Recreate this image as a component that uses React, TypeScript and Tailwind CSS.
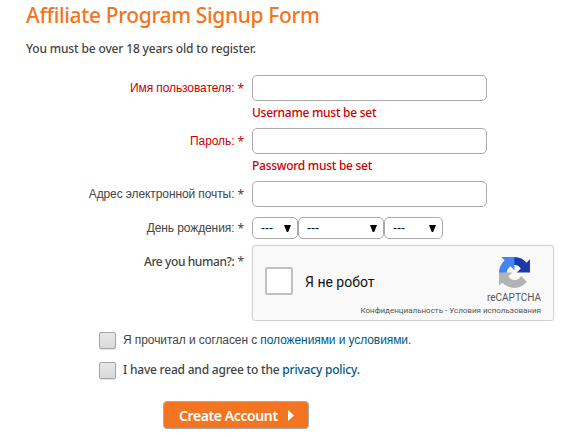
import type { ReactNode } from "react";

const UI = "font-['Noto_Sans','Open_Sans',sans-serif]";
const CYR = "font-['Liberation_Sans',sans-serif]";

function Row({ label, latin, red, className, children }: { label: string; latin?: boolean; red?: boolean; className: string; children: ReactNode }) {
  return (
    <div className={`flex items-start ${className}`}>
      <div className={`flex w-[244px] shrink-0 items-center justify-end whitespace-nowrap text-[12px] ${latin ? "h-[33px]" : "h-[26px]"} ${red ? "text-[#cc0000]" : "text-[#444444]"}`}>
        <span className={latin ? `${UI} font-medium tracking-[-0.4px]` : `${CYR} tracking-[-0.1px]`}>{label}</span>
        <span className={`${UI} ml-[3px] pt-px`}>*</span>
      </div>
      <div className="ml-2">{children}</div>
    </div>
  );
}

function Field({ error }: { error?: string }) {
  return (
    <>
      <input className="block h-[26px] w-[235px] rounded-[5px] border border-[#aaaaaa] bg-white px-2 outline-none" />
      {error && <p className={`${UI} mt-[3px] h-[18px] text-[12px] leading-[18px] font-medium tracking-[-0.27px] whitespace-nowrap text-[#cc0000]`}>{error}</p>}
    </>
  );
}

function Picker({ className }: { className: string }) {
  return (
    <button type="button" className={`flex h-[22px] items-center justify-between rounded-[5px] border border-[#aaaaaa] bg-white pr-[6px] pl-2 text-black ${className}`}>
      <span className={`${CYR} text-[12px] leading-none`}>---</span>
      <svg width="7" height="7" viewBox="0 0 7 7"><path d="M0 0h7L4.2 7H2.8z" fill="#000" /></svg>
    </button>
  );
}

function RecaptchaLogo() {
  return (
    <svg width="31" height="31" viewBox="0 0 64 64">
      <path d="M64 31.955l-.033-1.37V4.687l-7.16 7.16C50.948 4.674 42.033.093 32.05.093c-10.4 0-19.622 4.96-25.458 12.64l11.736 11.86a15.55 15.55 0 0 1 4.754-5.334c2.05-1.6 4.952-2.906 8.968-2.906.485 0 .86.057 1.135.163 4.976.393 9.288 3.14 11.828 7.124l-8.307 8.307L64 31.953" fill="#1c3aa9" />
      <path d="M31.862.094l-1.37.033H4.594l7.16 7.16C4.58 13.147 0 22.06 0 32.046c0 10.4 4.96 19.622 12.64 25.458L24.5 45.768a15.55 15.55 0 0 1-5.334-4.754c-1.6-2.05-2.906-4.952-2.906-8.968 0-.485.057-.86.163-1.135.393-4.976 3.14-9.288 7.124-11.828l8.307 8.307L31.86.095" fill="#4285f4" />
      <path d="M.001 32.045l.033 1.37v25.898l7.16-7.16c5.86 7.173 14.774 11.754 24.76 11.754 10.4 0 19.622-4.96 25.458-12.64l-11.736-11.86a15.55 15.55 0 0 1-4.754 5.334c-2.05 1.6-4.952 2.906-8.968 2.906-.485 0-.86-.057-1.135-.163-4.976-.393-9.288-3.14-11.828-7.124l8.307-8.307c-10.522.04-22.4.066-27.295-.005" fill="#b3b3b3" />
    </svg>
  );
}

function Captcha() {
  return (
    <div className="flex h-[76px] w-[302px] rounded-[3px] border border-[#d3d3d3] bg-[#f9f9f9] shadow-[0_0_3px_rgba(0,0,0,0.08)]">
      <div className="mt-[21px] ml-3 size-7 shrink-0 rounded-[2px] border-2 border-[#c1c1c1] bg-white" />
      <span className="mt-[27px] ml-3 w-[52px] font-[Roboto,sans-serif] text-[14px] leading-[18px] whitespace-nowrap text-[#111111]">Я не робот</span>
      <div className="mr-3 flex flex-1 flex-col items-end font-[Roboto,sans-serif] whitespace-nowrap text-[#555555]">
        <div className="mt-[11px] mr-[11px] h-[31px]"><RecaptchaLogo /></div>
        <span className="mt-[4px] text-[10px] leading-[12px]">reCAPTCHA</span>
        <span className="mt-[2px] text-[8px] leading-[10px]">Конфиденциальность - Условия использования</span>
      </div>
    </div>
  );
}

function Check({ children, className }: { children: ReactNode; className: string }) {
  return (
    <label className={`flex h-[18px] items-center pl-[99px] text-[12px] whitespace-nowrap text-[#444444] ${className}`}>
      <span className="mr-[7px] size-[17px] rounded-[2px] border border-[#a5a5a5] bg-linear-to-b from-[#e8e8e8] to-[#d9d9d9] shadow-[0_1px_1px_rgba(0,0,0,0.12)]" />
      {children}
    </label>
  );
}

export default function App() {
  return (
    <main className="h-[437px] w-[588px] overflow-hidden bg-white">
      <h1 className={`${UI} h-[32px] pl-[26px] text-[21px] leading-[31px] font-medium tracking-[-0.36px] whitespace-nowrap text-[#f47521]`}>Affiliate Program Signup Form</h1>
      <p className={`${UI} mt-[8px] h-[17px] pl-[26px] text-[12px] leading-[17px] font-medium tracking-[-0.15px] whitespace-nowrap text-[#444444]`}>You must be over 18 years old to register.</p>
      <form className="pt-[18px]">
        <Row label="Имя пользователя:" red className="h-[53px]"><Field error="Username must be set" /></Row>
        <Row label="Пароль:" red className="h-[53px]"><Field error="Password must be set" /></Row>
        <Row label="Адрес электронной почты:" className="h-[34px]"><Field /></Row>
        <Row label="День рождения:" className="h-[30px]">
          <div className="flex pt-[2px]">
            <Picker className="w-[46px]" />
            <Picker className="w-[86px]" />
            <Picker className="w-[59px]" />
          </div>
        </Row>
        <Row label="Are you human?:" latin className="h-[86px]"><Captcha /></Row>
        <Check className="">
          <span className={`${CYR} tracking-[-0.09px]`}>Я прочитал и согласен с <a className="text-[#00587f]">положениями и условиями</a>.</span>
        </Check>
        <Check className="mt-[12px]">
          <span className={`${UI} font-medium tracking-[-0.21px]`}>I have read and agree to the <a className="text-[#00587f]">privacy policy</a>.</span>
        </Check>
        <button type="button" className={`${UI} mt-[22px] ml-[163px] flex h-7 w-[146px] items-center rounded-[4px] border border-[#aaaaaa] bg-[#f47521] pl-[15px] text-[14px] font-semibold tracking-[-0.4px] whitespace-nowrap text-white`}>
          <span className="w-[109px] shrink-0 text-left">Create Account</span>
          <svg className="shrink-0" width="6" height="11" viewBox="0 0 6 11"><path d="M0 0l6 5.5L0 11z" fill="#fff" /></svg>
        </button>
      </form>
    </main>
  );
}
